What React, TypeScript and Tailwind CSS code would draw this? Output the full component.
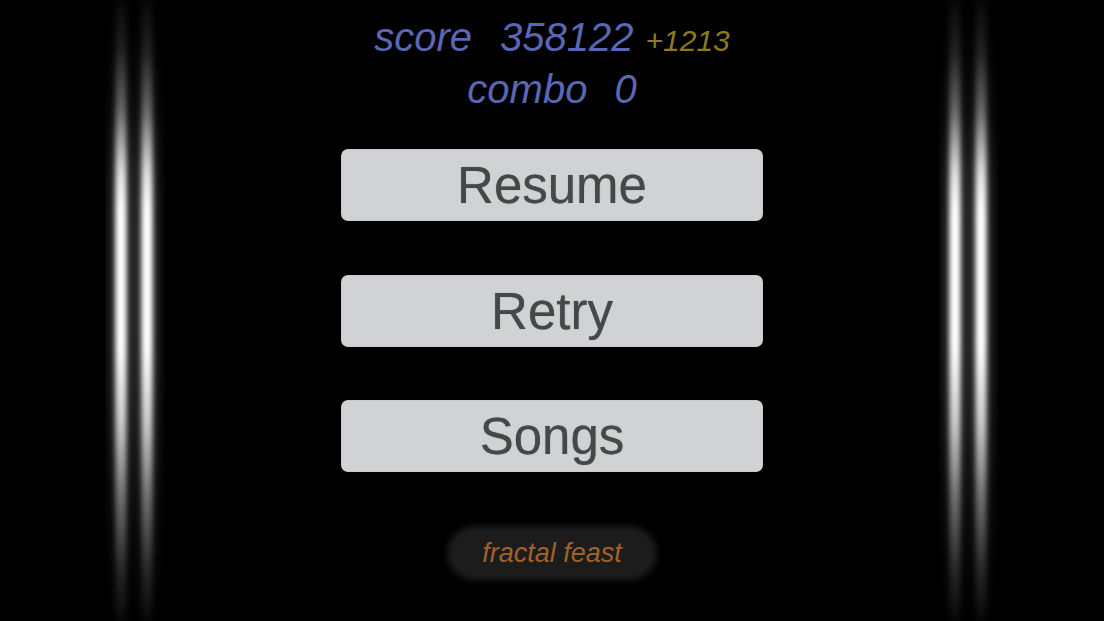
import React from "react";

const font = { fontFamily: '"Liberation Sans", Arial, Helvetica, sans-serif' };

function LightPair({ id }: { id: string }) {
  const xs = [16, 42];
  return (
    <svg width="60" height="621" viewBox="0 0 60 621" className="block">
      <defs>
        <linearGradient id={`${id}-g`} x1="0" y1="0" x2="0" y2="1">
          <stop offset="0" stopColor="#fff" stopOpacity="0.03" />
          <stop offset="0.08" stopColor="#fff" stopOpacity="0.1" />
          <stop offset="0.18" stopColor="#fff" stopOpacity="0.35" />
          <stop offset="0.28" stopColor="#fff" stopOpacity="0.85" />
          <stop offset="0.34" stopColor="#fff" stopOpacity="1" />
          <stop offset="0.56" stopColor="#fff" stopOpacity="1" />
          <stop offset="0.68" stopColor="#fff" stopOpacity="0.75" />
          <stop offset="0.8" stopColor="#fff" stopOpacity="0.38" />
          <stop offset="0.92" stopColor="#fff" stopOpacity="0.12" />
          <stop offset="1" stopColor="#fff" stopOpacity="0.03" />
        </linearGradient>
        <filter id={`${id}-b`} x="-200%" y="-10%" width="500%" height="120%">
          <feGaussianBlur stdDeviation="2.4 8" />
        </filter>
        <filter id={`${id}-h`} x="-300%" y="-10%" width="700%" height="120%">
          <feGaussianBlur stdDeviation="6 12" />
        </filter>
      </defs>
      {xs.map((x) => (
        <g key={x}>
          <rect x={x - 10} y="0" width="20" height="621" fill={`url(#${id}-g)`} opacity="0.25" filter={`url(#${id}-h)`} />
          <rect x={x - 5.5} y="0" width="11" height="621" fill={`url(#${id}-g)`} filter={`url(#${id}-b)`} />
        </g>
      ))}
    </svg>
  );
}

function MenuButton({ label }: { label: string }) {
  return (
    <button
      className="h-[72px] w-[422px] rounded-[7px] bg-[#d0d2d3] text-[51px] leading-[74px] text-[#464747] [text-shadow:0_0_1px_rgba(40,40,40,0.55)] shadow-[inset_0_0_2px_rgba(0,0,0,0.12)]"
      style={font}
    >
      {label}
    </button>
  );
}

export default function App() {
  return (
    <div className="flex h-[621px] w-full overflow-hidden bg-black">
      <div className="flex w-[270px] justify-center">
        <LightPair id="left" />
      </div>

      <div className="flex flex-1 flex-col items-center pt-[13px]" style={font}>
        <div className="flex items-baseline italic leading-[48px] text-[#5a67b5]">
          <span className="text-[40px]">score</span>
          <span className="ml-[28px] text-[40px]">358122</span>
          <span className="ml-[12px] text-[30px] text-[#8c7b1d]">+1213</span>
        </div>
        <div className="flex items-baseline italic leading-[48px] text-[#5a67b5]">
          <span className="text-[40px]">combo</span>
          <span className="ml-[27px] text-[40px]">0</span>
        </div>

        <div className="mt-[36px] flex flex-col items-center gap-[53.5px]">
          <MenuButton label="Resume" />
          <MenuButton label="Retry" />
          <MenuButton label="Songs" />
        </div>

        <div className="mt-[58px] flex h-[46px] w-[202px] items-center justify-center rounded-full bg-[#1c1c1c] shadow-[0_0_6px_4px_#1c1c1c]">
          <span className="text-[27px] italic leading-[46px] text-[#a0612b]" style={font}>
            fractal feast
          </span>
        </div>
      </div>

      <div className="flex w-[270px] justify-center">
        <LightPair id="right" />
      </div>
    </div>
  );
}
